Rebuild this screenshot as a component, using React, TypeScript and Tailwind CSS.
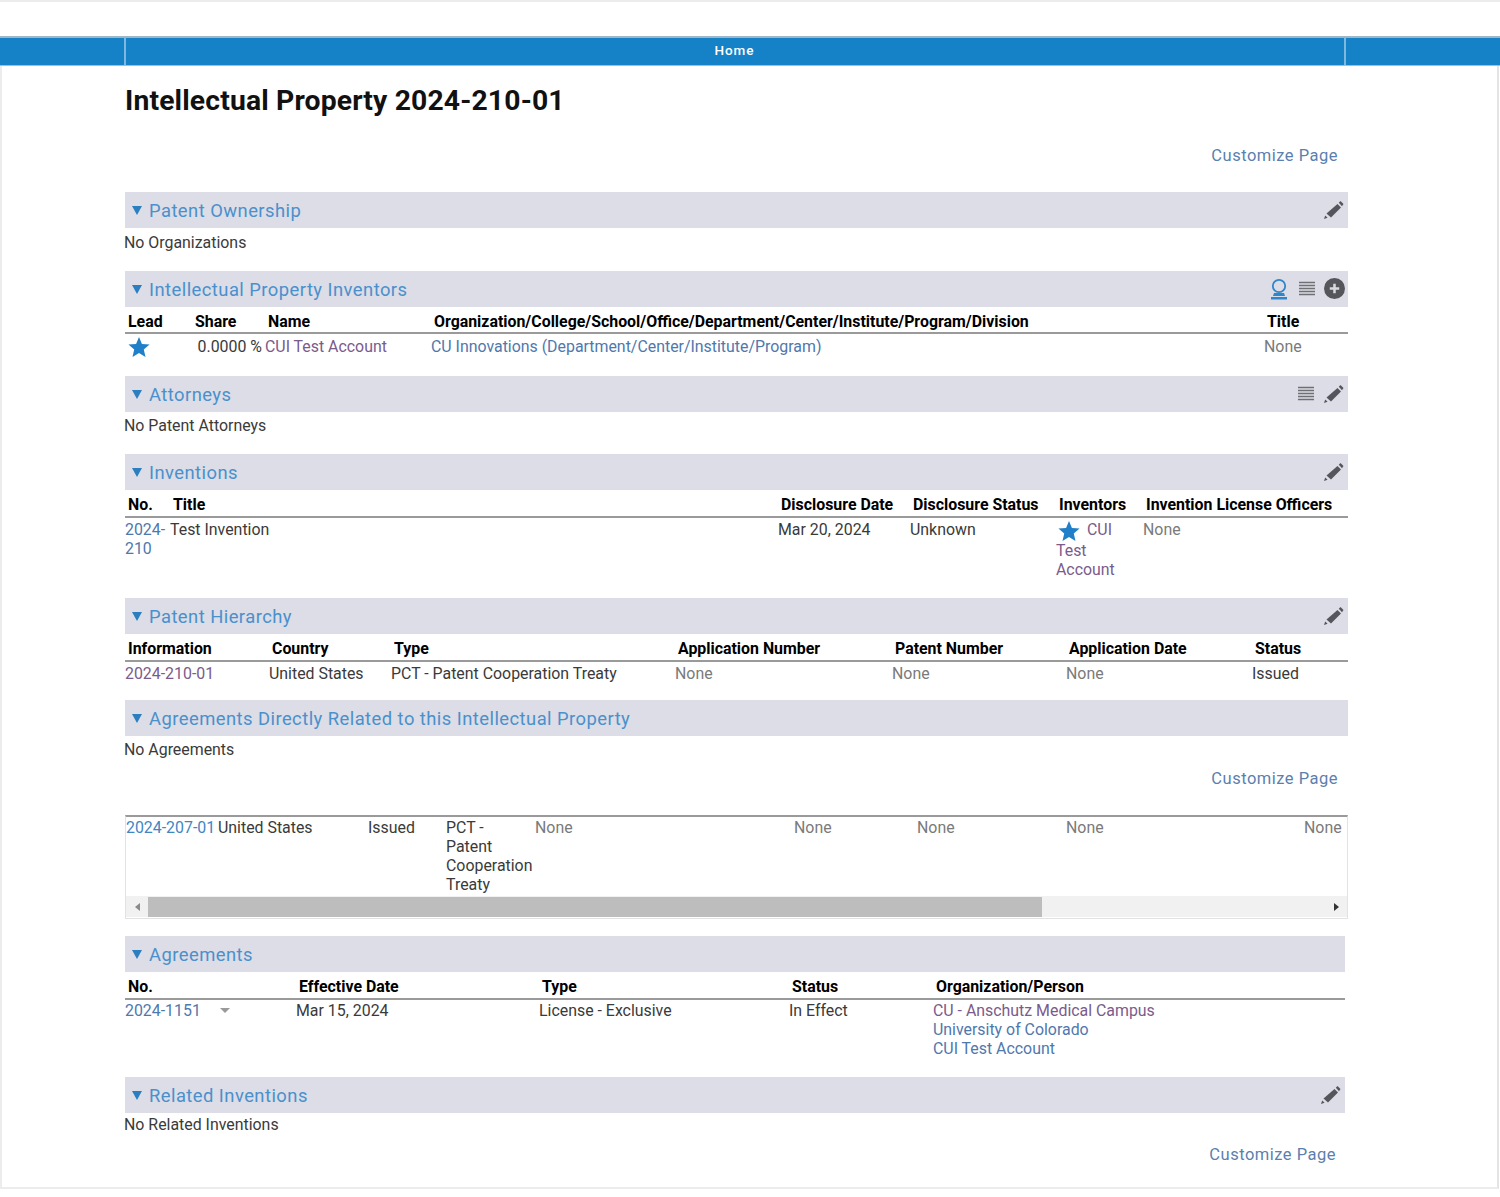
import type { ReactNode } from "react"

const link = "text-[#4f78ad]"
const purple = "text-[#7b5b8c]"
const none = "text-[#7a7a7a]"

function Pencil() {
  return (
    <svg viewBox="0 0 22 22" className="w-[22px] h-[22px] -mt-[2px]">
      <path d="M1 21l1.200-3.600 2.400 2.400z" fill="#55565c" />
      <path d="M3.500 15.500L14.500 6l3.500 3.500L8 19.500z" fill="#55565c" />
      <path d="M15.800 4.800L17.500 3l3 3-1.500 2.200z" fill="#55565c" />
    </svg>
  )
}

function Lines() {
  return (
    <svg viewBox="0 0 16 16" className="w-4 h-4 -mt-px">
      <path d="M0 1.500h16M0 4.500h16M0 7.500h16M0 10.500h16M0 13.500h16" stroke="#6f6f74" strokeWidth="1.300" />
    </svg>
  )
}

function PlusCircle() {
  return (
    <svg viewBox="0 0 20 20" className="w-[21px] h-[21px] -mt-px">
      <circle cx="10" cy="10" r="10" fill="#55565c" />
      <path d="M10 5.500v9M5.500 10h9" stroke="#d8d8de" strokeWidth="2.400" />
    </svg>
  )
}

function Person() {
  return (
    <svg viewBox="0 0 18 22" className="w-[18px] h-[22px] mr-[2px] -mt-px">
      <circle cx="9" cy="8" r="6.200" fill="none" stroke="#2f86c8" strokeWidth="1.800" />
      <path d="M4 15h10l1 3H3z" fill="#2f86c8" />
      <path d="M1 19h16v2.500H1z" fill="#2f86c8" />
    </svg>
  )
}

function Star({ className }: { className: string }) {
  return (
    <svg viewBox="0 0 24 24" className={className}>
      <path d="M12 1l3.200 7.600 8.300.7-6.300 5.400 1.900 8.100L12 18.500l-7.100 4.300 1.900-8.100L.5 9.300l8.300-.7z" fill="#1f7fc9" />
    </svg>
  )
}

function Header({ title, icons, narrow }: { title: string; icons?: ReactNode; narrow?: boolean }) {
  return (
    <div className={`h-9 bg-[#dcdde6] flex items-center pl-[7px] pr-[3px] ${narrow ? "mr-[3px]" : ""}`}>
      <span className="w-0 h-0 border-x-[5px] border-x-transparent border-t-[9px] border-t-[#2b7fc0] mr-[7px]" />
      <span className="text-[18.400px] leading-none tracking-[0.45px] text-[#4a90cc] pt-[2px]">{title}</span>
      <div className="ml-auto flex items-center gap-[9px]">{icons}</div>
    </div>
  )
}

function Customize({ className }: { className: string }) {
  return (
    <div className={`flex justify-end text-[16.500px] leading-5 tracking-[0.5px] text-[#5b7fae] ${className}`}>Customize Page</div>
  )
}

function HeadRow({ cols, names, tall }: { cols: string; names: string[]; tall?: boolean }) {
  return (
    <div className={`grid ${cols} ${tall ? "h-[28px] pb-[1px]" : "h-[27px]"} items-end border-b-2 border-[#9a9a9a] font-bold text-black`}>
      {names.map((n) => (
        <div key={n} className="pl-[3px] leading-5 whitespace-nowrap">{n}</div>
      ))}
    </div>
  )
}

const inventorsCols = "grid-cols-[67px_73px_166px_833px_84px]"
const inventionsCols = "grid-cols-[45px_608px_132px_146px_87px_205px]"
const hierarchyCols = "grid-cols-[144px_122px_284px_217px_174px_186px_96px]"
const relatedCols = "grid-cols-[92px_150px_78px_89px_259px_123px_149px_238px_43px]"
const agreementsCols = "grid-cols-[171px_243px_250px_144px_412px]"

export default function App() {
  return (
    <div className="w-[1500px] h-[1197px] bg-white font-['Roboto',sans-serif] text-[15.900px] leading-[19px] text-[#3a3a3a] overflow-hidden">
      <div className="h-[36px] border-t-2 border-[#ececec]" />
      <div className="h-[30px] bg-[#1581c6] border-t-2 border-[#9fb6c6] border-b border-b-[#8ec4e6] flex">
        <div className="w-[126px] border-r-2 border-[#7db8de]" />
        <div className="w-[1218px] text-center text-white font-medium text-[13.500px] tracking-[1px] leading-[25px] pr-[1px]">Home</div>
        <div className="flex-1 border-l-2 border-[#7db8de]" />
      </div>

      <div className="h-[1123px] mr-[1px] border-x-2 border-b-2 border-[#ececec] border-r-[#e4e4e4] pl-[123px] pr-[149px]">
        <h1 className="h-[68px] pt-[18px] text-[28.300px] leading-[34px] font-bold text-[#111] tracking-[0.15px]">
          Intellectual Property 2024-210-01
        </h1>
        <Customize className="pr-[10px] pt-[12px] mb-[26px]" />

        <Header title="Patent Ownership" icons={<Pencil />} />
        <div className="h-[43px] pt-[5px] -ml-px">No Organizations</div>

        <Header
          title="Intellectual Property Inventors"
          icons={
            <>
              <Person />
              <Lines />
              <PlusCircle />
            </>
          }
        />
        <HeadRow cols={inventorsCols} names={["Lead", "Share", "Name", "Organization/College/School/Office/Department/Center/Institute/Program/Division", "Title"]} />
        <div className={`grid ${inventorsCols} h-[42px] pt-[3px]`}>
          <div className="pl-[3px] -mt-[1px]"><Star className="w-[22px] h-[22px]" /></div>
          <div className="text-right pr-[3px]">0.0000 %</div>
          <div className={purple}>CUI Test Account</div>
          <div className={link}>CU Innovations (Department/Center/Institute/Program)</div>
          <div className={none}>None</div>
        </div>

        <Header
          title="Attorneys"
          icons={
            <>
              <Lines />
              <Pencil />
            </>
          }
        />
        <div className="h-[42px] pt-[4px] -ml-px">No Patent Attorneys</div>

        <Header title="Inventions" icons={<Pencil />} />
        <HeadRow tall cols={inventionsCols} names={["No.", "Title", "Disclosure Date", "Disclosure Status", "Inventors", "Invention License Officers"]} />
        <div className={`grid ${inventionsCols} h-[80px] pt-[2px]`}>
          <div className={link}>2024-<br />210</div>
          <div>Test Invention</div>
          <div>Mar 20, 2024</div>
          <div>Unknown</div>
          <div className={purple}>
            <div className="flex items-start h-[21px]">
              <Star className="w-[22px] h-[22px] ml-[2px] mr-[7px]" />CUI
            </div>
            Test<br />Account
          </div>
          <div className={none}>None</div>
        </div>

        <Header title="Patent Hierarchy" icons={<Pencil />} />
        <HeadRow tall cols={hierarchyCols} names={["Information", "Country", "Type", "Application Number", "Patent Number", "Application Date", "Status"]} />
        <div className={`grid ${hierarchyCols} h-[38px] pt-[2px]`}>
          <div className={purple}>2024-210-01</div>
          <div>United States</div>
          <div>PCT - Patent Cooperation Treaty</div>
          <div className={none}>None</div>
          <div className={none}>None</div>
          <div className={none}>None</div>
          <div>Issued</div>
        </div>

        <Header title="Agreements Directly Related to this Intellectual Property" />
        <div className="h-[31px] pt-[4px] -ml-px">No Agreements</div>
        <Customize className="pr-[10px] pt-[2px] mb-[26px]" />

        <div className="border-t-2 border-[#9a9a9a] border-x border-b border-x-[#e2e2e2] border-b-[#e2e2e2] h-[104px] flex flex-col">
          <div className={`grid ${relatedCols} h-[79px] pt-[1px]`}>
            <div className="text-[#3f86c4]">2024-207-01</div>
            <div>United States</div>
            <div>Issued</div>
            <div>PCT -<br />Patent<br />Cooperation<br />Treaty</div>
            <div className={none}>None</div>
            <div className={none}>None</div>
            <div className={none}>None</div>
            <div className={none}>None</div>
            <div className={none}>None</div>
          </div>
          <div className="h-[21px] bg-[#f1f1f1] flex items-center">
            <div className="w-[22px] flex justify-center">
              <span className="w-0 h-0 border-y-[4px] border-y-transparent border-r-[5px] border-r-[#8a8a8a]" />
            </div>
            <div className="w-[894px] h-[20px] bg-[#bdbdbd]" />
            <div className="flex-1 flex justify-end pr-[8px]">
              <span className="w-0 h-0 border-y-[4px] border-y-transparent border-l-[5px] border-l-[#333]" />
            </div>
          </div>
        </div>

        <div className="h-[17px]" />
        <Header title="Agreements" narrow />
        <div className="mr-[3px]">
          <HeadRow tall cols={agreementsCols} names={["No.", "Effective Date", "Type", "Status", "Organization/Person"]} />
          <div className={`grid ${agreementsCols} h-[77px] pt-[1px]`}>
            <div className="flex items-center h-[19px]">
              <span className={link}>2024-1151</span>
              <span className="w-0 h-0 ml-[19px] border-x-[5px] border-x-transparent border-t-[5px] border-t-[#9a9a9a]" />
            </div>
            <div>Mar 15, 2024</div>
            <div>License - Exclusive</div>
            <div>In Effect</div>
            <div>
              <div className={purple}>CU - Anschutz Medical Campus</div>
              <div className={link}>University of Colorado</div>
              <div className={link}>CUI Test Account</div>
            </div>
          </div>
        </div>

        <Header title="Related Inventions" icons={<Pencil />} narrow />
        <div className="h-[32px] pt-[2px] -ml-px">No Related Inventions</div>
        <Customize className="pr-[12px]" />
      </div>
    </div>
  )
}
